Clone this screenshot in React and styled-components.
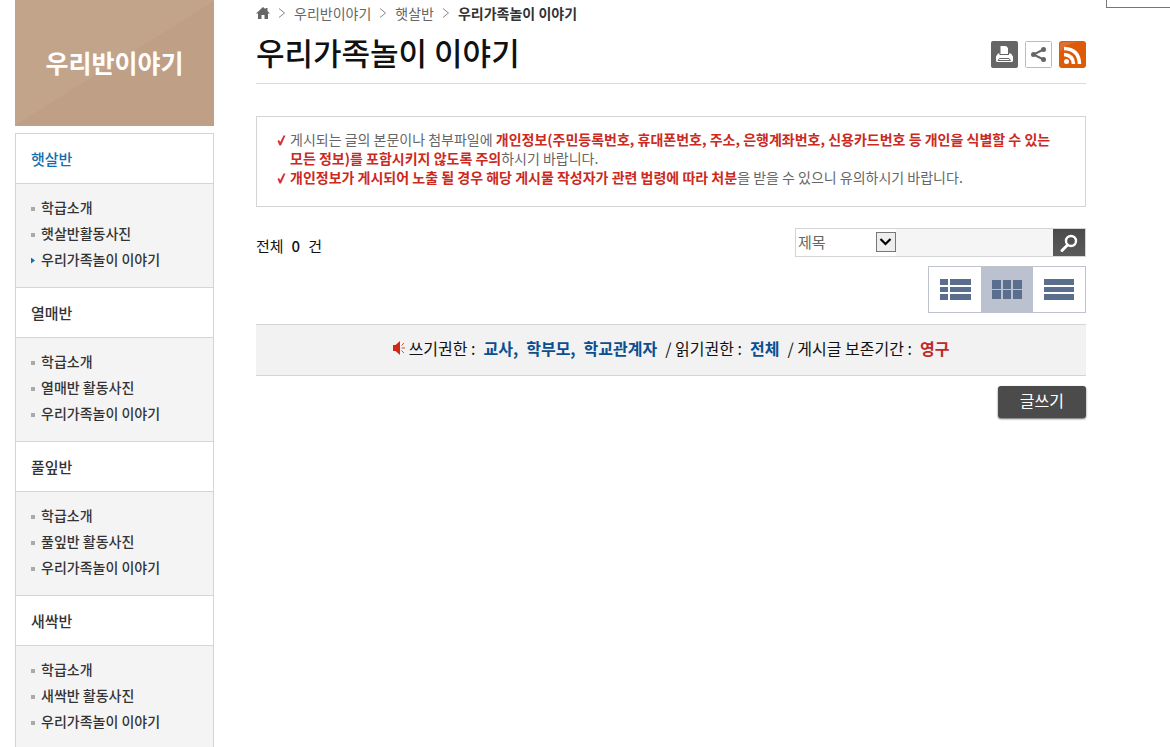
import React, { useState } from "react";
import styled, { createGlobalStyle } from "styled-components";

const GlobalStyle = createGlobalStyle`
  * {
    box-sizing: border-box;
  }
  body {
    margin: 0;
    background: #fff;
    color: #333;
    font-family: "Noto Sans CJK KR", "Liberation Sans", sans-serif;
    font-size: 14px;
  }
  a {
    color: inherit;
    text-decoration: none;
  }
  button, input, select {
    font-family: inherit;
    margin: 0;
  }
`;

const Page = styled.div`
  display: flex;
  align-items: flex-start;
  gap: 42px;
  padding: 0 84px 0 15px;
`;

const QuickBox = styled.div`
  position: absolute;
  top: 0;
  right: 0;
  width: 64px;
  height: 8px;
  border: 1px solid #777;
  border-width: 0 0 1px 1px;
`;

const Sidebar = styled.aside`
  flex: 0 0 199px;
`;

const Banner = styled.h2`
  display: flex;
  align-items: center;
  justify-content: center;
  height: 126px;
  margin: 0 0 7px;
  padding-bottom: 2px;
  background: linear-gradient(148deg, #c2a48b 50%, #bf9f85 50%);
  color: #fff;
  font-size: 25px;
  font-weight: 700;
`;

const Menu = styled.nav`
  border: 1px solid #d5d5d5;
  border-width: 0 1px;
`;

const MenuTitle = styled.h3`
  margin: 0;
  padding: 0 15px;
  border: 1px solid #d5d5d5;
  border-width: 1px 0;
  color: ${(props) => (props.$active ? "#1270ad" : "#333")};
  font-size: 15px;
  font-weight: 500;
  line-height: 49px;
`;

const SubMenu = styled.ul`
  margin: 0;
  padding: 10px 15px 15px;
  background: #f4f4f4;
  list-style: none;
`;

const SubItem = styled.li`
  display: flex;
  align-items: center;
  gap: 6px;
  font-weight: 500;
  line-height: 26px;

  &::before {
    content: "";
    width: 4px;
    height: ${(props) => (props.$active ? "6px" : "4px")};
    margin-top: 3px;
    background: ${(props) => (props.$active ? "#1270ad" : "#aaa")};
    clip-path: ${(props) =>
      props.$active ? "polygon(0 0, 100% 50%, 0 100%)" : "none"};
  }
`;

const Main = styled.main`
  flex: 1;
  min-width: 0;
`;

const Breadcrumb = styled.nav`
  display: flex;
  align-items: center;
  gap: 8px;
  height: 26px;
  color: #666;
  font-size: 14px;

  strong {
    color: #333;
  }
`;

const TitleRow = styled.header`
  display: flex;
  align-items: center;
  justify-content: space-between;
  height: 58px;
  border-bottom: 1px solid #d9d9d9;
`;

const Title = styled.h1`
  margin: 0;
  padding-bottom: 6px;
  color: #111;
  font-size: 31px;
  font-weight: 500;
  line-height: 44px;
`;

const Tools = styled.div`
  display: flex;
  gap: 7px;
`;

const ToolButton = styled.button`
  width: 27px;
  height: 27px;
  padding: 0;
  border: 0;
  background: none;

  svg {
    display: block;
  }
`;

const Notice = styled.ul`
  margin: 32px 0 0;
  padding: 13px 12px 19px 20px;
  border: 1px solid #d5d5d5;
  color: #666;
  line-height: 19px;
  list-style: none;

  li {
    display: flex;
    gap: 4px;
  }
  svg {
    flex: none;
    margin-top: 5px;
  }
  p {
    margin: 0;
  }
  strong {
    color: #cc2a1e;
  }
`;

const ListTop = styled.div`
  display: flex;
  align-items: flex-start;
  justify-content: space-between;
  margin-top: 21px;
`;

const Total = styled.p`
  display: flex;
  gap: 8px;
  margin: 0;
  color: #111;
  font-size: 15px;
  line-height: 36px;

  strong {
    font-weight: 500;
  }
`;

const Controls = styled.div`
  display: flex;
  flex-direction: column;
  align-items: flex-end;
  gap: 9px;
`;

const SearchForm = styled.form`
  display: flex;
  height: 29px;
  border: 1px solid #d5d5d5;
`;

const SelectBox = styled.div`
  position: relative;
  width: 100px;
  background: #fff;

  svg {
    position: absolute;
    top: 3px;
    right: 0;
    pointer-events: none;
  }
`;

const Select = styled.select`
  appearance: none;
  display: block;
  width: 100%;
  height: 24px;
  padding: 0 2px;
  border: 0;
  background: #fff;
  color: #666;
  font-size: 15px;
`;

const SearchInput = styled.input`
  width: 157px;
  padding: 0 6px;
  border: 0;
  background: #f5f5f5;
`;

const SearchButton = styled.button`
  width: 32px;
  padding: 0;
  border: 0;
  background: linear-gradient(#4a4a4a, #5a5a5a);

  svg {
    display: block;
  }
`;

const ViewSwitch = styled.div`
  display: flex;
  border: 1px solid #bfc3cb;
`;

const ViewButton = styled.button`
  display: flex;
  align-items: center;
  justify-content: center;
  width: 52px;
  height: 45px;
  padding: 0 0 1px;
  border: 0;
  background: ${(props) => (props.$active ? "#bbc1cf" : "#fff")};
`;

const Permission = styled.div`
  display: flex;
  align-items: center;
  justify-content: center;
  gap: 8px;
  height: 52px;
  margin-top: 11px;
  padding-bottom: 4px;
  border: 1px solid #d5d5d5;
  border-width: 1px 0;
  background: #f2f2f2;
  color: #111;
  font-size: 16px;

  strong {
    color: #0b4f8f;
  }
  em {
    color: #c0282a;
    font-style: normal;
    font-weight: 700;
  }
`;

const PermissionLabel = styled.span`
  display: flex;
  align-items: center;
  gap: 4px;
`;

const Actions = styled.div`
  display: flex;
  justify-content: flex-end;
  margin-top: 10px;
`;

const WriteButton = styled.button`
  height: 32px;
  padding: 0 22px 4px;
  border: 0;
  border-radius: 3px;
  background: #4b4b4b;
  box-shadow: 0 1px 2px rgba(0, 0, 0, 0.6);
  color: #fff;
  font-size: 16px;
`;

const groups = [
  {
    title: "햇살반",
    active: true,
    items: ["학급소개", "햇살반활동사진", "우리가족놀이 이야기"],
    current: 2
  },
  {
    title: "열매반",
    items: ["학급소개", "열매반 활동사진", "우리가족놀이 이야기"]
  },
  {
    title: "풀잎반",
    items: ["학급소개", "풀잎반 활동사진", "우리가족놀이 이야기"]
  },
  {
    title: "새싹반",
    items: ["학급소개", "새싹반 활동사진", "우리가족놀이 이야기"]
  }
];

const HomeIcon = () => (
  <svg width="14" height="12" viewBox="0 0 14 12" fill="#666">
    <path d="M7 0 0 6.5h2V12h3.500V8h3v4H12V6.500h2L11.500 4V1h-2v1.300z" />
  </svg>
);

const Chevron = () => (
  <svg width="8" height="10" viewBox="0 0 8 10" fill="none" stroke="#888">
    <path d="M1 .5 6.500 5 1 9.500" />
  </svg>
);

const CheckIcon = () => (
  <svg width="9" height="11" viewBox="0 0 9 11" fill="#d8303a">
    <path d="M.5 6 2 5 3.300 7 6.500 .5H8.500L4 10.500H2.500z" />
  </svg>
);

const PrintIcon = () => (
  <svg width="27" height="27" viewBox="0 0 27 27">
    <rect width="27" height="27" rx="2" fill="#666" />
    <path d="M9.500 5h5.500l2 2v6H9.500z" fill="#fff" />
    <path d="M7 12.500h1.500V14H18v-1.500h2l2 3v4q0 1.500-1.500 1.500h-14Q5 21 5 19.500v-4z" fill="#fff" />
    <path d="M8.500 17.500h9.500l1.500 2H7z" fill="#fff" stroke="#666" />
  </svg>
);

const ShareIcon = () => (
  <svg width="27" height="27" viewBox="0 0 27 27">
    <rect x=".5" y=".5" width="26" height="26" rx="1" fill="#fff" stroke="#bbb" />
    <path d="M18.500 8.500 8.500 13.500 18.500 18.500" fill="none" stroke="#666" strokeWidth="2" />
    <circle cx="18.500" cy="8.500" r="2.500" fill="#666" />
    <circle cx="8.500" cy="13.500" r="2.500" fill="#666" />
    <circle cx="18.500" cy="18.500" r="2.500" fill="#666" />
  </svg>
);

const RssIcon = () => (
  <svg width="27" height="27" viewBox="0 0 27 27">
    <rect width="27" height="27" rx="3" fill="#dd5a06" />
    <path d="M1 11V4q0-3 3-3h14Q6 3 1 11z" fill="#e07030" />
    <circle cx="7.500" cy="20.500" r="2.500" fill="#fff" />
    <path d="M5 13.500q9 .5 9.500 9.500M5 7.500q15 .5 15.500 15.500" fill="none" stroke="#fff" strokeWidth="3.500" />
  </svg>
);

const ArrowIcon = () => (
  <svg width="20" height="20" viewBox="0 0 20 20">
    <rect x=".5" y=".5" width="19" height="19" fill="#eee" stroke="#777" />
    <path d="M4.500 7 9.500 12 14.500 7" fill="none" stroke="#000" strokeWidth="2.200" />
  </svg>
);

const SearchIcon = () => (
  <svg width="32" height="27" viewBox="0 0 32 27" fill="none" stroke="#fff">
    <circle cx="18" cy="12" r="5" strokeWidth="2.400" />
    <path d="M14.500 16 9 21.500" strokeWidth="3" strokeLinecap="round" />
  </svg>
);

const SpeakerIcon = () => (
  <svg width="12" height="14" viewBox="0 0 12 14">
    <path d="M0 4h2.500L7 0v14L2.500 10H0z" fill="#cf2a17" />
    <path d="M8.500 4.500 11 2M8.500 7H12M8.500 9.500 11 12" stroke="#d9503c" />
  </svg>
);

const views = [
  {
    label: "목록형",
    icon: (
      <svg width="31" height="21" viewBox="0 0 31 21" fill="#5a6f8d">
        <path d="M0 0h8v6H0zM10 0h21v6H10zM0 8h8v5H0zM10 8h21v5H10zM0 15h8v6H0zM10 15h21v6H10z" />
      </svg>
    )
  },
  {
    label: "앨범형",
    icon: (
      <svg width="30" height="19" viewBox="0 0 30 19" fill="#5a6f8d">
        <path d="M0 0h9v9H0zM11 0h8v9h-8zM21 0h9v9h-9zM0 10h9v9H0zM11 10h8v9h-8zM21 10h9v9h-9z" />
      </svg>
    )
  },
  {
    label: "게시판형",
    icon: (
      <svg width="30" height="21" viewBox="0 0 30 21" fill="#5a6f8d">
        <path d="M0 0h30v6H0zM0 8h30v5H0zM0 15h30v6H0z" />
      </svg>
    )
  }
];

function App() {
  const [view, setView] = useState(1);
  const [keyword, setKeyword] = useState("");

  return (
    <>
      <GlobalStyle />
      <QuickBox />
      <Page>
        <Sidebar>
          <Banner>우리반이야기</Banner>
          <Menu>
            {groups.map((group) => (
              <section key={group.title}>
                <MenuTitle $active={group.active}>
                  <a href="#">{group.title}</a>
                </MenuTitle>
                <SubMenu>
                  {group.items.map((item, i) => (
                    <SubItem key={item} $active={group.current === i}>
                      <a href="#">{item}</a>
                    </SubItem>
                  ))}
                </SubMenu>
              </section>
            ))}
          </Menu>
        </Sidebar>

        <Main>
          <Breadcrumb>
            <a href="#" aria-label="홈">
              <HomeIcon />
            </a>
            <Chevron />
            <a href="#">우리반이야기</a>
            <Chevron />
            <a href="#">햇살반</a>
            <Chevron />
            <strong>우리가족놀이 이야기</strong>
          </Breadcrumb>
          <TitleRow>
            <Title>우리가족놀이 이야기</Title>
            <Tools>
              <ToolButton type="button" aria-label="인쇄">
                <PrintIcon />
              </ToolButton>
              <ToolButton type="button" aria-label="공유">
                <ShareIcon />
              </ToolButton>
              <ToolButton type="button" aria-label="RSS">
                <RssIcon />
              </ToolButton>
            </Tools>
          </TitleRow>

          <Notice>
            <li>
              <CheckIcon />
              <p>
                게시되는 글의 본문이나 첨부파일에{" "}
                <strong>
                  개인정보(주민등록번호, 휴대폰번호, 주소, 은행계좌번호,
                  신용카드번호 등 개인을 식별할 수 있는
                  <br />
                  모든 정보)를 포함시키지 않도록 주의
                </strong>
                하시기 바랍니다.
              </p>
            </li>
            <li>
              <CheckIcon />
              <p>
                <strong>
                  개인정보가 게시되어 노출 될 경우 해당 게시물 작성자가 관련
                  법령에 따라 처분
                </strong>
                을 받을 수 있으니 유의하시기 바랍니다.
              </p>
            </li>
          </Notice>

          <ListTop>
            <Total>
              <span>전체</span>
              <strong>0</strong>
              <span>건</span>
            </Total>
            <Controls>
              <SearchForm onSubmit={(e) => e.preventDefault()}>
                <SelectBox>
                  <Select aria-label="검색 조건">
                    <option>제목</option>
                    <option>내용</option>
                  </Select>
                  <ArrowIcon />
                </SelectBox>
                <SearchInput
                  aria-label="검색어"
                  value={keyword}
                  onChange={(e) => setKeyword(e.target.value)}
                />
                <SearchButton aria-label="검색">
                  <SearchIcon />
                </SearchButton>
              </SearchForm>
              <ViewSwitch>
                {views.map((item, i) => (
                  <ViewButton
                    key={item.label}
                    type="button"
                    aria-label={item.label}
                    $active={view === i}
                    onClick={() => setView(i)}
                  >
                    {item.icon}
                  </ViewButton>
                ))}
              </ViewSwitch>
            </Controls>
          </ListTop>

          <Permission>
            <PermissionLabel>
              <SpeakerIcon />
              쓰기권한 :
            </PermissionLabel>
            <strong>교사,</strong>
            <strong>학부모,</strong>
            <strong>학교관계자</strong>
            <span>/ 읽기권한 :</span>
            <strong>전체</strong>
            <span>/ 게시글 보존기간 :</span>
            <em>영구</em>
          </Permission>
          <Actions>
            <WriteButton type="button">글쓰기</WriteButton>
          </Actions>
        </Main>
      </Page>
    </>
  );
}

export default App;
